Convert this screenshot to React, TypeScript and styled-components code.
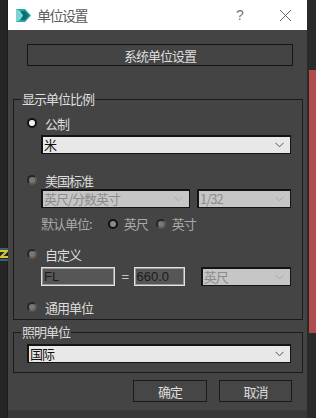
import React from "react";
import styled, { createGlobalStyle } from "styled-components";

const GlobalStyle = createGlobalStyle`
  html, body {
    margin: 0;
    padding: 0;
    background: #262626;
  }
  body {
    font-family: "Noto Sans CJK SC", "Noto Sans", "Liberation Sans", sans-serif;
    font-size: 13px;
  }
  #root {
    width: 316px;
    height: 418px;
    overflow: hidden;
  }
`;

function Chevron({ color }: { color: string }) {
  return (
    <svg width="9" height="6" viewBox="0 0 9 6">
      <polyline points="0.5,0.8 4.5,4.8 8.5,0.8" fill="none" stroke={color} strokeWidth="1" />
    </svg>
  );
}

function AppIcon() {
  return (
    <svg width="16" height="15" viewBox="0 0 16 15">
      <polygon points="0,1 9,1 15,7.5 9,14 0,14" fill="#2aa6a6" />
      <polygon points="4,3 9,3 13,7.5 9,12 4,12 7,7.5" fill="#0d6f73" />
      <polygon points="0,1 4,3 7,7.5 4,12 0,14" fill="#7fd3d0" />
    </svg>
  );
}

function Radio({ checked, dim }: { checked?: boolean; dim?: boolean }) {
  return <RadioDot $checked={checked} $dim={dim} />;
}

function Select({
  value,
  width,
  disabled,
}: {
  value: string;
  width: number;
  disabled?: boolean;
}) {
  return (
    <SelectBox $disabled={disabled} style={{ width }}>
      <span>{value}</span>
      <Chevron color={disabled ? "#a8a8a8" : "#555"} />
    </SelectBox>
  );
}

export default function App() {
  return (
    <Screen>
      <GlobalStyle />
      <LeftGutter>
        <ViewportBits>
          <svg width="8" height="16" viewBox="0 0 8 16">
            <polyline points="0,3 7,3 1,9 8,9" fill="none" stroke="#d8c23a" strokeWidth="2" />
            <polyline points="0,1 8,1" stroke="#3aa7b5" strokeWidth="1" />
            <polyline points="0,12 8,12" stroke="#3aa7b5" strokeWidth="1" />
          </svg>
        </ViewportBits>
      </LeftGutter>
      <Dialog>
        <TitleBar>
          <AppIcon />
          <Title>单位设置</Title>
          <Help>?</Help>
          <Close>
            <svg width="13" height="13" viewBox="0 0 13 13">
              <path d="M1 1 L12 12 M12 1 L1 12" stroke="#666" strokeWidth="1" />
            </svg>
          </Close>
        </TitleBar>
        <Body>
          <SystemButton>系统单位设置</SystemButton>

          <Group $mt={33} $pb={3}>
            <Legend>显示单位比例</Legend>
            <RadioRow $mt={14}>
              <Radio checked />
              <span>公制</span>
            </RadioRow>
            <Indent $mt={3}>
              <Select value="米" width={250} />
            </Indent>

            <RadioRow $mt={17}>
              <Radio />
              <span>美国标准</span>
            </RadioRow>
            <Indent $mt={0}>
              <Select value="英尺/分数英寸" width={149} disabled />
              <Select value="1/32" width={94} disabled />
            </Indent>
            <Indent $mt={6}>
              <DimLabel>默认单位:</DimLabel>
              <SubOption $ml={9}>
                <Radio checked dim />
                <DimLabel>英尺</DimLabel>
              </SubOption>
              <SubOption $ml={8}>
                <Radio dim />
                <DimLabel>英寸</DimLabel>
              </SubOption>
            </Indent>

            <RadioRow $mt={12}>
              <Radio />
              <span>自定义</span>
            </RadioRow>
            <Indent $mt={4}>
              <TextField style={{ width: 76 }}>FL</TextField>
              <Equals>=</Equals>
              <TextField style={{ width: 53 }}>660.0</TextField>
              <Spacer />
              <Select value="英尺" width={93} disabled />
            </Indent>

            <RadioRow $mt={12}>
              <Radio />
              <span>通用单位</span>
            </RadioRow>
          </Group>

          <Group $mt={12} $pb={9}>
            <Legend>照明单位</Legend>
            <WideIndent>
              <Select value="国际" width={264} />
            </WideIndent>
          </Group>

          <ButtonRow>
            <DialogButton style={{ width: 74 }}>确定</DialogButton>
            <DialogButton style={{ width: 73 }}>取消</DialogButton>
          </ButtonRow>
        </Body>
        <BottomEdge />
      </Dialog>
      <RightGutter>
        <RedStrip />
      </RightGutter>
    </Screen>
  );
}

const Screen = styled.div`
  display: flex;
  width: 316px;
  height: 418px;
`;

const LeftGutter = styled.div`
  width: 8px;
  background: #252525;
  border-right: 1px solid #1c1c1c;
  box-sizing: border-box;
  display: flex;
  flex-direction: column;
`;

const ViewportBits = styled.div`
  margin-top: 248px;
  line-height: 0;
`;

const RightGutter = styled.div`
  flex: 1;
  background: #2a2a2a;
  display: flex;
  justify-content: flex-end;
`;

const RedStrip = styled.div`
  width: 7px;
  height: 263px;
  margin-top: 70px;
  background: #b24c4c;
`;

const Dialog = styled.div`
  width: 299px;
  background: #444444;
  display: flex;
  flex-direction: column;
  color: #dcdcdc;
`;

const TitleBar = styled.div`
  height: 30px;
  background: #ffffff;
  display: flex;
  align-items: center;
  padding-left: 8px;
  color: #5c5c5c;
`;

const Title = styled.div`
  flex: 1;
  margin-left: 5px;
  font-size: 14px;
  letter-spacing: -1.5px;
`;

const Help = styled.div`
  width: 20px;
  text-align: center;
  font-family: "Liberation Sans", sans-serif;
  font-size: 14px;
  color: #777;
  margin-right: 15px;
`;

const Close = styled.div`
  width: 40px;
  display: flex;
  justify-content: center;
  line-height: 0;
  margin-right: 2px;
`;

const Body = styled.div`
  flex: 1;
  display: flex;
  flex-direction: column;
  padding-top: 14px;
`;

const BottomEdge = styled.div`
  height: 7px;
  background: #383838;
  border-top: 1px solid #3c3c3c;
`;

const SystemButton = styled.div`
  margin-left: 19px;
  width: 266px;
  height: 22px;
  box-sizing: border-box;
  border: 1px solid #161616;
  display: flex;
  align-items: center;
  justify-content: center;
  font-size: 13px;
  letter-spacing: -1px;
  color: #dedede;
`;

const Group = styled.div<{ $mt: number; $pb: number }>`
  position: relative;
  margin: ${(p) => p.$mt}px 4px 0 5px;
  padding-bottom: ${(p) => p.$pb}px;
  border: 1px solid #1b1b1b;
  display: flex;
  flex-direction: column;
`;

const Legend = styled.div`
  position: absolute;
  top: -10px;
  left: 7px;
  padding: 0 1px;
  background: #444444;
  font-size: 13px;
  line-height: 18px;
  letter-spacing: -1px;
  color: #dedede;
`;

const RadioRow = styled.div<{ $mt: number }>`
  margin-top: ${(p) => p.$mt}px;
  height: 18px;
  display: flex;
  align-items: center;
  gap: 8px;
  padding-left: 13px;
  font-size: 13px;
  letter-spacing: -1px;
  color: #dcdcdc;
`;

const RadioDot = styled.span<{ $checked?: boolean; $dim?: boolean }>`
  width: 10px;
  height: 10px;
  box-sizing: border-box;
  border-radius: 50%;
  flex-shrink: 0;
  border: 2px solid ${(p) => (p.$checked ? "#111" : "#262626")};
  border-right-color: ${(p) => (p.$checked ? "#111" : "#5a5a5a")};
  border-bottom-color: ${(p) => (p.$checked ? "#111" : "#5a5a5a")};
  background: ${(p) =>
    p.$checked ? (p.$dim ? "#8a8a8a" : "#f4f4f4") : "#777777"};
`;

const Indent = styled.div<{ $mt: number }>`
  margin-top: ${(p) => p.$mt}px;
  padding-left: 27px;
  padding-right: 11px;
  display: flex;
  align-items: center;
  gap: 7px;
`;

const WideIndent = styled.div`
  margin-top: 11px;
  padding-left: 13px;
  display: flex;
`;

const SelectBox = styled.div<{ $disabled?: boolean }>`
  height: 19px;
  box-sizing: border-box;
  border: 2px solid #141414;
  border-right-width: 1px;
  border-bottom-width: 1px;
  background: ${(p) => (p.$disabled ? "#c6c6c6" : "#e8e8e8")};
  color: ${(p) => (p.$disabled ? "#8c8c8c" : "#101010")};
  display: flex;
  align-items: center;
  justify-content: space-between;
  padding: 0 6px 0 1px;
  font-size: 13px;
  letter-spacing: -1px;
  span {
    line-height: 16px;
  }
`;

const DimLabel = styled.span`
  font-size: 13px;
  letter-spacing: -1px;
  color: #a9a9a9;
`;

const SubOption = styled.span<{ $ml: number }>`
  display: flex;
  align-items: center;
  gap: 6px;
  margin-left: ${(p) => p.$ml}px;
  margin-right: -7px;
`;

const TextField = styled.div`
  height: 19px;
  box-sizing: border-box;
  border: 1px solid #e2e2e2;
  outline: 1px solid #9a9a9a;
  outline-offset: -2px;
  background: #565656;
  color: #1c1c1c;
  font-family: "Liberation Sans", sans-serif;
  font-size: 13px;
  line-height: 17px;
  padding-left: 2px;
`;

const Equals = styled.span`
  width: 5px;
  text-align: center;
  color: #c8c8c8;
  font-family: "Liberation Sans", sans-serif;
  font-size: 13px;
`;

const Spacer = styled.span`
  width: 2px;
`;

const ButtonRow = styled.div`
  margin-top: 7px;
  display: flex;
  justify-content: flex-end;
  gap: 12px;
  padding-right: 15px;
`;

const DialogButton = styled.div`
  height: 22px;
  box-sizing: border-box;
  border: 1px solid #1a1a1a;
  background: #464646;
  display: flex;
  align-items: center;
  justify-content: center;
  font-size: 13px;
  letter-spacing: -1px;
  color: #dedede;
`;
